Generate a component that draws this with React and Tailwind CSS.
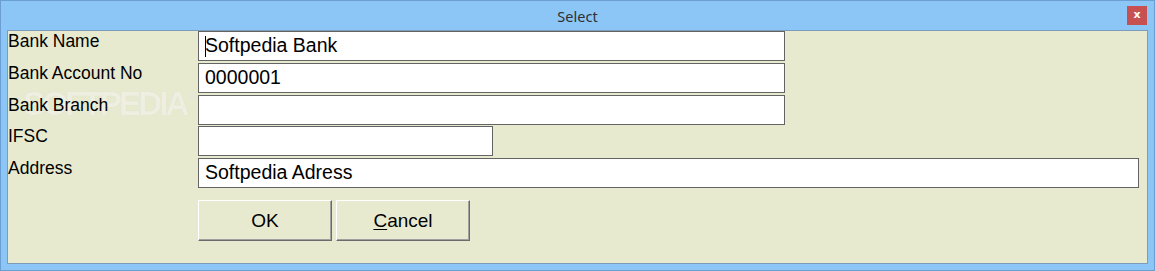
import React from "react";

function Field({ label, width, value, cursor, mt }) {
  return (
    <div className={`relative flex ${mt}`}>
      <div className="w-[190px] shrink-0 text-[17.5px] leading-[20px] text-black">{label}</div>
      <div
        className={`${width} h-[30px] shrink-0 border border-[#646464] bg-white flex items-center pl-[6px] text-[19.5px] text-black whitespace-nowrap`}
      >
        {cursor && <span className="inline-block w-[1px] h-[21px] bg-black mr-[-1px]" />}
        {value}
      </div>
    </div>
  );
}

export default function App() {
  return (
    <div className="w-[1155px] h-[271px] bg-[#8cc6f7] border border-[#6b9fd4] flex flex-col font-['Liberation_Sans',Arial,sans-serif]">
      {/* Title bar */}
      <div className="h-[29px] shrink-0 grid grid-cols-[1fr_auto_1fr]">
        <div />
        <div className="self-center text-[14.5px] text-[#303030] font-['Noto_Sans',sans-serif] leading-none pt-[1px]">
          Select
        </div>
        <div className="flex justify-end items-start pt-[5px] pr-[7px]">
          <div className="w-[20px] h-[19px] bg-[#c75050] flex items-center justify-center text-white text-[11px] font-bold leading-none font-['DejaVu_Sans',sans-serif] pb-[2px]">
            x
          </div>
        </div>
      </div>

      {/* Client area */}
      <div className="relative mx-[6px] h-[234px] shrink-0 border border-[#7e9cb9] bg-[#e8ead0] flex flex-col">
        <div className="pointer-events-none absolute left-[15px] top-[55px] flex items-start select-none">
          <span className="text-[33px] leading-[36px] font-bold tracking-[-2.8px] text-[#eeefe1] [text-shadow:0_0_1px_#d6d7c5]">
            SOFTPEDIA
          </span>
          <span className="text-[10px] leading-none text-[#eeefe1] [text-shadow:0_0_1px_#d6d7c5] mt-[6px] ml-[2px]">®</span>
        </div>

        <Field label="Bank Name" width="w-[587px]" value="Softpedia Bank" cursor mt="mt-0" />
        <Field label="Bank Account No" width="w-[587px]" value="0000001" mt="mt-[2px]" />
        <Field label="Bank Branch" width="w-[587px]" value="" mt="mt-[2px]" />
        <Field label="IFSC" width="w-[295px]" value="" mt="mt-[1px]" />
        <Field label="Address" width="w-[941px]" value="Softpedia Adress" mt="mt-[2px]" />

        <div className="relative flex gap-[4px] ml-[190px] mt-[12px]">
          <button className="w-[134px] h-[41px] bg-[#e8ead0] border border-t-white border-l-white border-r-[#6b6b6b] border-b-[#6b6b6b] shadow-[inset_-1px_-1px_0_#a0a0a0] text-[19px] text-black leading-none">
            OK
          </button>
          <button className="w-[134px] h-[41px] bg-[#e8ead0] border border-t-white border-l-white border-r-[#6b6b6b] border-b-[#6b6b6b] shadow-[inset_-1px_-1px_0_#a0a0a0] text-[19px] text-black leading-none">
            <span className="underline underline-offset-2">C</span>ancel
          </button>
        </div>
      </div>
    </div>
  );
}
